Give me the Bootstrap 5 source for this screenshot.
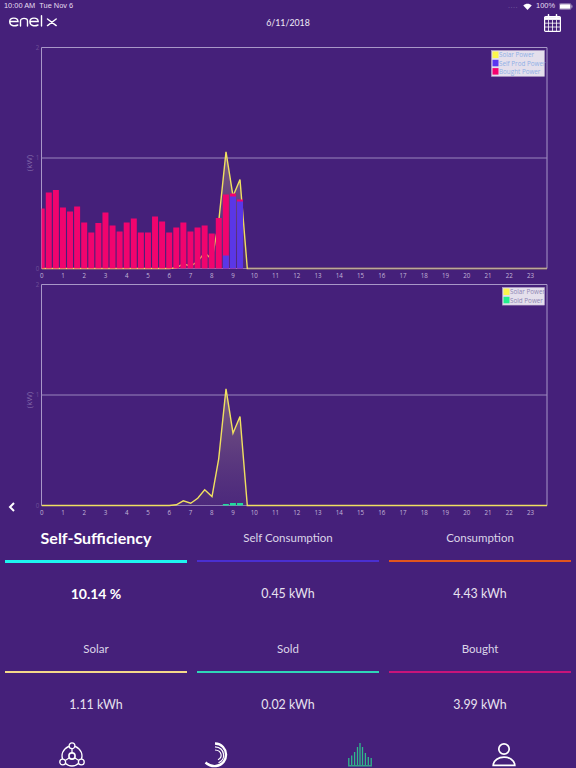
<!DOCTYPE html>
<html lang="en">
<head>
    <meta charset="UTF-8">
    <meta name="viewport" content="width=device-width, initial-scale=1.0">
    <title>Enel X - Self-Sufficiency</title>
    <link href="https://cdn.jsdelivr.net/npm/bootstrap@5.3.0/dist/css/bootstrap.min.css" rel="stylesheet">
    <style>
        body { background: #45207a; color: #fff; font-family: "Lato", sans-serif; width: 576px; height: 768px; overflow: hidden; }
        .status-row { height: 12px; padding: 0 3px 0 4px; font-family: "Liberation Sans", sans-serif; font-size: 7.4px; line-height: 12px; color: #e6dff0; }
        .signal-dots { color: #7d62a5; letter-spacing: 0.5px; margin-right: 1px; }
        .head-row { height: 23px; padding: 3px 15px 0 9px; position: relative; }
        .head-date { position: absolute; left: 0; right: 0; top: 5px; text-align: center; font-size: 8.8px; color: #f0ebf6; line-height: 12px; }
        .cal-icon { margin-top: -1px; }
        .chart-wrap { position: relative; height: 485px; }
        .chart-wrap svg { display: block; }
        .back-arrow { position: absolute; left: 8px; top: 467px; }
        .tick { font-family: "Open Sans", sans-serif; font-size: 6.2px; fill: #c3b6d8; text-anchor: middle; }
        .tick-y { fill: #6d4f98; }
        .unit-txt { font-family: "Open Sans", sans-serif; font-size: 8px; fill: #8067a8; text-anchor: middle; }
        .legend-txt { font-family: "Open Sans", sans-serif; font-size: 6.3px; fill: #8fb0e6; }
        .stat-name { height: 40px; line-height: 36px; font-size: 11.5px; color: #dcd5e8; text-align: center; }
        .stat-name.on { font-size: 16px; font-weight: 700; color: #fff; }
        .stat-line { height: 1.5px; margin: 0 5px; }
        .stat-line.on { height: 3.3px; margin-bottom: -1.8px; }
        .stat-value { height: 69.5px; line-height: 63px; font-size: 12.4px; color: #e8e2f0; text-align: center; }
        .stat-value.on { font-size: 14px; font-weight: 700; color: #fff; }
        .tabs-row { height: 26px; }
        .tabs-row svg { display: block; margin: 0 auto; }
    </style>
</head>
<body>
    <div class="status-row d-flex justify-content-between align-items-center">
        <span>10:00 AM &nbsp;Tue Nov 6</span>
        <span class="d-flex align-items-center gap-1">
            <span class="signal-dots">....</span>
            <svg width="9" height="7" viewBox="0 0 16 12"><path d="M8 12 L0.5 4 C4.5 0 11.5 0 15.5 4 Z" fill="#fff"/></svg>
            <span>100%</span>
            <svg width="14" height="7" viewBox="0 0 15 7"><rect x="0.3" y="0.3" width="12.6" height="6.4" rx="1.3" fill="none" stroke="#cfc6df" stroke-width="0.5"/><rect x="1" y="1" width="11.2" height="5" rx="0.7" fill="#fff"/><rect x="13.4" y="2.3" width="0.9" height="2.4" fill="#cfc6df"/></svg>
        </span>
    </div>
    <div class="head-row d-flex justify-content-between align-items-start">
        <svg width="48" height="12" viewBox="0 0 48 12" fill="none" stroke="#fff" stroke-width="1.4" stroke-linecap="round">
            <path d="M0.8 6.5 H9 C8.8 2 0.8 2 0.7 6.5 C0.7 11 5.5 11.5 8.8 10"/>
            <path d="M11.5 11 V6 C11.5 2.5 18.5 2.5 18.5 6 V11"/>
            <path d="M21 6.5 H29.2 C29 2 21 2 20.9 6.5 C20.9 11 25.7 11.5 29 10"/>
            <path d="M32.5 0.8 V11"/>
            <path d="M38.5 4 L47.2 10.6 M47.2 4 L38.5 10.6"/>
        </svg>
        <div class="head-date">6/11/2018</div>
        <svg class="cal-icon" width="17" height="18" viewBox="0 0 17 18" fill="none" stroke="#fff">
            <rect x="0.6" y="2.6" width="15.8" height="14.8" rx="1" stroke-width="1.2"/>
            <path d="M0.6 4.5 H16.4" stroke-width="2.8"/>
            <path d="M0.6 9.2 H16.4 M0.6 13 H16.4 M4.5 6 V17.4 M8.5 6 V17.4 M12.5 6 V17.4" stroke-width="0.8"/>
            <path d="M4.5 0.7 V3.5 M12.5 0.7 V3.5" stroke-width="1.5" stroke-linecap="round"/>
        </svg>
    </div>

    <div class="chart-wrap">
        <svg id="charts" width="576" height="485" viewBox="0 35 576 485"></svg>
        <svg class="back-arrow" width="8" height="10" viewBox="0 0 8 10"><path d="M6 1 L2 5 L6 9" fill="none" stroke="#fff" stroke-width="2"/></svg>
    </div>

    <div id="stats" class="row g-0"></div>

    <div class="tabs-row row g-0 text-center">
        <div class="col-3">
            <svg width="26" height="26" viewBox="0 0 26 26" fill="none" stroke="#fff" stroke-width="1.3">
                <circle cx="13" cy="14" r="10"/>
                <path d="M13 4 V11 M4.5 19.5 L10.5 15.7 M21.5 19.5 L15.5 15.7"/>
                <circle cx="13" cy="3.8" r="2.9" fill="#45207a"/>
                <circle cx="3.7" cy="20" r="2.9" fill="#45207a"/>
                <circle cx="22.3" cy="20" r="2.9" fill="#45207a"/>
                <circle cx="13" cy="14" r="3.1" fill="#45207a" stroke-width="1.6"/>
            </svg>
        </div>
        <div class="col-3">
            <svg width="26" height="26" viewBox="0 0 26 26" fill="none" stroke="#fff">
                <path d="M12 1.5 C26 2 27 22 13 24 C9.5 24.5 5.5 23 2.5 20.5" stroke-width="2.4"/>
                <path d="M12 4.8 C22.5 5.5 23 18 15.5 20.8" stroke-width="1.2"/>
                <path d="M12 8 C19 8.5 20 15.5 15 17.8" stroke-width="1.2"/>
            </svg>
        </div>
        <div class="col-3">
            <svg width="26" height="26" viewBox="0 0 26 26" fill="none" stroke="#2fb98c" stroke-width="1.3">
                <path d="M1.8 23 V16 M4.7 23 V13.5 M7.6 23 V10 M10.5 23 V5 M13 23 V1 M15.5 23 V5 M18.4 23 V11 M21.3 23 V15 M24.2 23 V16"/>
                <path d="M1 23.8 H25" stroke-width="1.3"/>
            </svg>
        </div>
        <div class="col-3">
            <svg width="26" height="26" viewBox="0 0 26 26" fill="none" stroke="#fff" stroke-width="1.7">
                <circle cx="13" cy="7" r="5.2"/>
                <path d="M2.2 23.3 C3 12.5 23 12.5 23.8 23.3 Z"/>
            </svg>
        </div>
    </div>

    <script src="https://cdn.jsdelivr.net/npm/bootstrap@5.3.0/dist/js/bootstrap.bundle.min.js"></script>
    <script>
        // hour 0 sits at x=41.7, one hour is 21.25px, one bar every 20 minutes
        const X0 = 41.7, HOUR = 21.25;
        // solar curve as [x, height above baseline]
        const solar = [[41.7,0],[169.3,0],[176.3,0.7],[183.3,4.7],[190.7,2.3],[197.7,7.3],[204.7,15.7],[212,9],[218.7,46.7],[226,116.7],[233,72.3],[240,89],[247.3,0],[547,0]];
        // bar tops read off the reference, in px above baseline
        const bars = [60,76,78.5,61,57,62,46,36,45.5,56,43,37,46,50,36,36,52,47,36,41,46,37,41,43,35,50.5,74,75,69];
        const selfProd = { 26: 13, 27: 72, 28: 67 };
        const sold = { 26: 1.5, 27: 2.5, 28: 2.5 };

        function axes(top) {
            const base = top + 221;
            let s = `<path d="M41.5 ${base} V${top} H547 V${base}" fill="none" stroke="#a897c8" stroke-width="1"/>`;
            s += `<path d="M41.5 ${top + 110.5} H547 M41.5 ${base} H547" fill="none" stroke="#9a85bd" stroke-width="1"/>`;
            for (let h = 0; h <= 23; h++) s += `<text class="tick" x="${X0 + h * HOUR}" y="${base + 9.5}">${h}</text>`;
            s += `<text class="tick tick-y" x="37.5" y="${top + 2}">2</text><text class="tick tick-y" x="37.5" y="${top + 112.5}">1</text><text class="tick tick-y" x="37.5" y="${base + 2}">0</text>`;
            s += `<text class="unit-txt" transform="translate(32 ${top + 115.5}) rotate(-90)">(kW)</text>`;
            return s;
        }
        function solarCurve(base) {
            const pts = solar.map(p => `${p[0]},${base - p[1]}`).join(' ');
            return `<linearGradient id="solarFill${base}" gradientUnits="userSpaceOnUse" x1="0" y1="${base - 117}" x2="0" y2="${base}"><stop offset="0" stop-color="#8a6a84" stop-opacity="0.85"/><stop offset="1" stop-color="#5a3a80" stop-opacity="0.35"/></linearGradient>` +
                `<polygon points="${pts}" fill="url(#solarFill${base})"/>` +
                `<polyline points="${pts}" fill="none" stroke="#f0e060" stroke-width="1.4"/>`;
        }
        function legend(x, y, w, items, textFill) {
            let s = `<rect x="${x}" y="${y}" width="${w}" height="${items.length * 8.3 + 1}" fill="#e4dfec" stroke="#b9aacd" stroke-width="0.5"/>`;
            items.forEach((it, i) => {
                const ty = y + 1 + i * 8.3;
                s += `<rect x="${x + 1}" y="${ty}" width="6" height="6.5" fill="${it[1]}"/><text class="legend-txt" x="${x + 7.5}" y="${ty + 5.8}" style="fill:${textFill}">${it[0]}</text>`;
            });
            return s;
        }

        let out = '';
        // top chart, bars sit over the solar line
        const base1 = 268.5;
        out += axes(47.5);
        out += solarCurve(base1);
        // the flat tail of the top curve reads muted in the reference
        out += `<path d="M248 ${base1} H547" stroke="#9a85bd" stroke-width="1" opacity="0.6"/>`;
        bars.forEach((h, i) => {
            const cx = X0 + i * (HOUR / 3);
            const x = Math.max(cx - 3, 41.5), w = cx + 3 - x;
            out += `<rect x="${x}" y="${base1 - h}" width="${w}" height="${h}" fill="#f0046e"/>`;
            if (selfProd[i]) out += `<rect x="${x}" y="${base1 - selfProd[i]}" width="${w}" height="${selfProd[i]}" fill="#5a37e6"/>`;
        });
        out += legend(491.5, 50.5, 53, [['Solar Power', '#fcf64c'], ['Self Prod Power', '#5a37f0'], ['Bought Power', '#f5006e']], '#8fb0e6');
        // bottom chart
        const base2 = 505.5;
        out += axes(284.5);
        out += solarCurve(base2);
        Object.keys(sold).forEach(i => {
            const cx = X0 + i * (HOUR / 3);
            out += `<rect x="${cx - 3}" y="${base2 - sold[i]}" width="6" height="${sold[i]}" fill="#1fdc9c"/>`;
        });
        out += legend(502.5, 287.5, 42, [['Solar Power', '#fcf64c'], ['Sold Power', '#22f08e']], '#8f86b4');
        document.getElementById('charts').innerHTML = out;

        const stats = [
            { name: 'Self-Sufficiency', value: '10.14 %', color: '#1ef5f0', on: true },
            { name: 'Self Consumption', value: '0.45 kWh', color: '#4a2fd0' },
            { name: 'Consumption', value: '4.43 kWh', color: '#e2551c' },
            { name: 'Solar', value: '1.11 kWh', color: '#f5d98a' },
            { name: 'Sold', value: '0.02 kWh', color: '#2fd6b8' },
            { name: 'Bought', value: '3.99 kWh', color: '#c8147a' }
        ];
        document.getElementById('stats').innerHTML = stats.map(s => `
            <div class="col-4">
                <div class="stat-name ${s.on ? 'on' : ''}">${s.name}</div>
                <div class="stat-line ${s.on ? 'on' : ''}" style="background:${s.color}"></div>
                <div class="stat-value ${s.on ? 'on' : ''}">${s.value}</div>
            </div>`).join('');
    </script>
</body>
</html>
